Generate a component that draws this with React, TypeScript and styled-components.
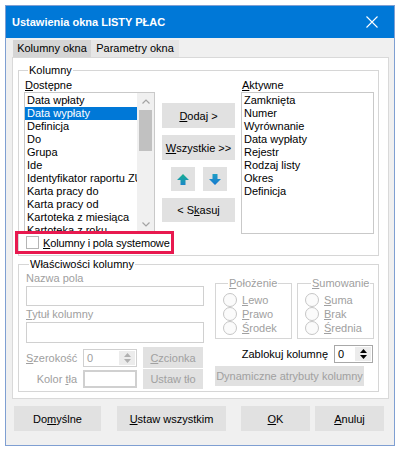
import React from 'react';
import styled, { createGlobalStyle } from 'styled-components';

const FONT = `"Liberation Sans", Arial, sans-serif`;
const GRAY_TEXT = '#a0a0a0';

const GlobalStyle = createGlobalStyle`
  html, body {
    margin: 0;
    padding: 0;
    background: #fff;
  }
  body {
    font-family: ${FONT};
    font-size: 11px;
    color: #000;
  }
  * {
    box-sizing: border-box;
  }
`;

const Window = styled.div`
  margin: 5px 0 0 5px;
  width: 390px;
  border: 1px solid #7f9fd2;
  background: #f0f0f0;
`;

const TitleBar = styled.div`
  height: 32px;
  background: #0078d7;
  color: #fff;
  display: flex;
  align-items: center;
  justify-content: space-between;
  padding: 0 16px 0 6px;
`;

const Title = styled.span`
  font-weight: bold;
  font-size: 11px;
`;

const Body = styled.div`
  padding: 2px 5px 14px 6px;
`;

const TabRow = styled.div`
  display: flex;
  height: 17px;
  padding-left: 1px;
`;

const Tab = styled.div<{ $w: number; $active?: boolean }>`
  width: ${(p) => p.$w}px;
  text-align: center;
  line-height: 17px;
  background: ${(p) => (p.$active ? '#d5d5d5' : '#e6e6e6')};
  white-space: nowrap;
`;

const Panel = styled.div`
  border: 1px solid #d9d9d9;
  background: #fff;
  height: 342px;
  padding: 5px 0 0 5px;
`;

const Group = styled.fieldset<{ $w: number }>`
  margin: 0;
  padding: 0;
  width: ${(p) => p.$w}px;
  min-width: 0;
  border: 1px solid #d6d6d6;
`;

const Legend = styled.legend<{ $ml?: number; $disabled?: boolean }>`
  margin-left: ${(p) => p.$ml ?? 9}px;
  padding: 0 1px;
  line-height: 15px;
  color: ${(p) => (p.$disabled ? GRAY_TEXT : '#000')};
`;

const Key = styled.span`
  text-decoration: underline;
`;

/* ---- Kolumny ---- */

const ColumnsArea = styled.div`
  display: flex;
  padding: 0 3px 0 5px;
`;

const ListCol = styled.div<{ $w: number }>`
  width: ${(p) => p.$w}px;
  display: flex;
  flex-direction: column;
`;

const ListLabel = styled.div`
  line-height: 14px;
  padding-left: 1px;
`;

const ListBox = styled.div`
  height: 142px;
  border: 1px solid #c9c9c9;
  display: flex;
  background: #fff;
`;

const ListItems = styled.div`
  flex: 1;
  min-width: 0;
  overflow: hidden;
  padding-top: 1px;
`;

const ListItem = styled.div<{ $selected?: boolean }>`
  height: 13px;
  line-height: 13px;
  padding-left: 2px;
  white-space: nowrap;
  overflow: hidden;
  background: ${(p) => (p.$selected ? '#0078d7' : 'transparent')};
  color: ${(p) => (p.$selected ? '#fff' : '#000')};
`;

const ScrollBar = styled.div`
  width: 17px;
  background: #f0f0f0;
  display: flex;
  flex-direction: column;
  align-items: center;
`;

const ScrollBtn = styled.div`
  height: 17px;
  width: 17px;
  display: flex;
  align-items: center;
  justify-content: center;
`;

const ScrollTrack = styled.div`
  flex: 1;
  width: 13px;
`;

const ScrollThumb = styled.div`
  height: 41px;
  background: #c1c1c1;
`;

const MidCol = styled.div`
  width: 73px;
  margin: 0 6px 0 7px;
  padding-top: 25px;
  display: flex;
  flex-direction: column;
  gap: 7px;
`;

const Button = styled.button<{ $w?: number; $h?: number; $disabled?: boolean }>`
  font-family: ${FONT};
  font-size: 11px;
  width: ${(p) => (p.$w ? `${p.$w}px` : '100%')};
  height: ${(p) => p.$h ?? 25}px;
  border: none;
  padding: 0;
  background: #e1e1e1;
  color: ${(p) => (p.$disabled ? GRAY_TEXT : '#000')};
  white-space: nowrap;
  display: flex;
  align-items: center;
  justify-content: center;
`;

const ArrowRow = styled.div`
  display: flex;
  justify-content: space-between;
  padding: 0 8px 0 9px;
`;

const CheckRow = styled.div`
  width: 159px;
  height: 23px;
  margin: -3px 0 1px -4px;
  border: 3px solid #e8194f;
  display: flex;
  align-items: center;
  gap: 4px;
  padding-left: 8px;
  white-space: nowrap;
  position: relative;
`;

const CheckLabel = styled.span`
  letter-spacing: -0.15px;
`;

const CheckBox = styled.div`
  width: 13px;
  height: 13px;
  border: 1px solid #b5b5b5;
  background: #fff;
`;

/* ---- Właściwości kolumny ---- */

const PropsGroup = styled(Group)`
  margin-top: 1px;
`;

const PropsArea = styled.div`
  display: grid;
  grid-template-columns: 178px 159px;
  column-gap: 11px;
  padding: 0 0 2px 7px;
`;

const PropsLeft = styled.div`
  display: flex;
  flex-direction: column;
`;

const FieldLabel = styled.div`
  line-height: 12px;
  height: 12px;
  color: ${GRAY_TEXT};
  margin: 0 0 2px 0;
`;

const TextBox = styled.div<{ $h: number }>`
  height: ${(p) => p.$h}px;
  border: 1px solid #d0d0d0;
  background: #fff;
  margin-bottom: 2px;
`;

const FormRow = styled.div<{ $h: number; $mt?: number }>`
  display: grid;
  grid-template-columns: 51px 54px 60px;
  column-gap: 6px;
  align-items: center;
  height: ${(p) => p.$h}px;
  margin-top: ${(p) => p.$mt ?? 0}px;
`;

const RowLabel = styled.div`
  text-align: right;
  color: ${GRAY_TEXT};
  white-space: nowrap;
`;

const Spin = styled.div<{ $w: number; $disabled?: boolean }>`
  width: ${(p) => p.$w}px;
  height: 18px;
  border: 1px solid ${(p) => (p.$disabled ? '#d0d0d0' : '#a8a8a8')};
  background: #fff;
  display: flex;
  align-items: center;
  padding: 0 1px 0 3px;
  color: ${(p) => (p.$disabled ? GRAY_TEXT : '#000')};
`;

const SpinValue = styled.span`
  flex: 1;
`;

const SpinButtons = styled.div<{ $disabled?: boolean }>`
  width: 16px;
  height: 14px;
  background: #ececec;
  display: flex;
  flex-direction: column;
  align-items: center;
  justify-content: center;
  gap: 2px;
  color: ${(p) => (p.$disabled ? '#b0b0b0' : '#000')};
`;

const ColorBox = styled.div`
  height: 18px;
  border: 2px solid #d0d0d0;
  background: #fff;
`;

const PropsRight = styled.div`
  display: flex;
  flex-direction: column;
  padding-top: 4px;
`;

const RadioGroups = styled.div`
  display: flex;
  gap: 5px;
`;

const RadioList = styled.div`
  display: flex;
  flex-direction: column;
  padding: 2px 0 3px 7px;
`;

const RadioRow = styled.div`
  display: flex;
  align-items: center;
  gap: 5px;
  height: 14px;
  color: ${GRAY_TEXT};
`;

const RadioCircle = styled.div`
  width: 14px;
  height: 14px;
  border-radius: 50%;
  border: 1px solid #c6c6c6;
  background: #fbfbfb;
`;

const LockRow = styled.div`
  display: flex;
  align-items: center;
  justify-content: flex-end;
  gap: 6px;
  margin: 6px 1px 0 0;
  height: 18px;
`;

const DynButton = styled(Button)`
  margin-top: 3px;
`;

const FooterRow = styled.div`
  display: flex;
  margin-top: 7px;
  padding-left: 2px;
`;

const FooterBtn = styled(Button)<{ $ml?: number }>`
  margin-left: ${(p) => p.$ml ?? 0}px;
`;

/* ---- drawings ---- */

const CloseIcon = () => (
  <svg width="12" height="12" viewBox="0 0 12 12">
    <path d="M0.5 0.5 L11.5 11.5 M11.5 0.5 L0.5 11.5" stroke="#fff" strokeWidth="1.1" />
  </svg>
);

const Chevron = ({ up }: { up?: boolean }) => (
  <svg width="8" height="5" viewBox="0 0 8 5">
    <path d={up ? 'M0.5 4.5 L4 1 L7.5 4.5' : 'M0.5 0.5 L4 4 L7.5 0.5'} stroke="#a3a3a3" strokeWidth="1.2" fill="none" />
  </svg>
);

const Tri = ({ up }: { up?: boolean }) => (
  <svg width="7" height="4" viewBox="0 0 7 4">
    <path d={up ? 'M0 4 L3.5 0 L7 4 Z' : 'M0 0 L3.5 4 L7 0 Z'} fill="currentColor" />
  </svg>
);

const MoveArrow = ({ up }: { up?: boolean }) => {
  const id = up ? 'arrUp' : 'arrDown';
  return (
    <svg width="12" height="11" viewBox="0 0 12 11">
      <defs>
        <linearGradient id={id} x1="0" y1="0" x2="0" y2="1">
          <stop offset="0" stopColor={up ? '#18b08f' : '#1f9fc4'} />
          <stop offset="1" stopColor={up ? '#1a86c9' : '#1577cf'} />
        </linearGradient>
      </defs>
      <path
        d={up ? 'M6 0 L12 6 L8.5 6 L8.5 11 L3.5 11 L3.5 6 L0 6 Z' : 'M6 11 L12 5 L8.5 5 L8.5 0 L3.5 0 L3.5 5 L0 5 Z'}
        fill={`url(#${id})`}
      />
    </svg>
  );
};

const available = [
  'Data wpłaty',
  'Data wypłaty',
  'Definicja',
  'Do',
  'Grupa',
  'Ide',
  'Identyfikator raportu ZUS',
  'Karta pracy do',
  'Karta pracy od',
  'Kartoteka z miesiąca',
  'Kartoteka z roku',
];

const active = ['Zamknięta', 'Numer', 'Wyrównanie', 'Data wypłaty', 'Rejestr', 'Rodzaj listy', 'Okres', 'Definicja'];

const Radio = ({ k, rest }: { k: string; rest: string }) => (
  <RadioRow>
    <RadioCircle />
    <span>
      <Key>{k}</Key>
      {rest}
    </span>
  </RadioRow>
);

export default function App() {
  return (
    <>
      <GlobalStyle />
      <Window>
        <TitleBar>
          <Title>Ustawienia okna LISTY PŁAC</Title>
          <CloseIcon />
        </TitleBar>
        <Body>
          <TabRow>
            <Tab $w={78} $active>
              Kolumny okna
            </Tab>
            <Tab $w={88}>Parametry okna</Tab>
          </TabRow>
          <Panel>
            <Group $w={361}>
              <Legend>Kolumny</Legend>
              <ColumnsArea>
                <ListCol $w={131}>
                  <ListLabel>
                    <Key>D</Key>ostępne
                  </ListLabel>
                  <ListBox>
                    <ListItems>
                      {available.map((item, i) => (
                        <ListItem key={item} $selected={i === 1}>
                          {item}
                        </ListItem>
                      ))}
                    </ListItems>
                    <ScrollBar>
                      <ScrollBtn>
                        <Chevron up />
                      </ScrollBtn>
                      <ScrollTrack>
                        <ScrollThumb />
                      </ScrollTrack>
                      <ScrollBtn>
                        <Chevron />
                      </ScrollBtn>
                    </ScrollBar>
                  </ListBox>
                </ListCol>
                <MidCol>
                  <Button>
                    <span>
                      <Key>D</Key>odaj &gt;
                    </span>
                  </Button>
                  <Button>
                    <span>
                      <Key>W</Key>szystkie &gt;&gt;
                    </span>
                  </Button>
                  <ArrowRow>
                    <Button $w={24} $h={24}>
                      <MoveArrow up />
                    </Button>
                    <Button $w={24} $h={24}>
                      <MoveArrow />
                    </Button>
                  </ArrowRow>
                  <Button $h={24}>
                    <span>
                      &lt; S<Key>k</Key>asuj
                    </span>
                  </Button>
                </MidCol>
                <ListCol $w={133}>
                  <ListLabel>
                    <Key>A</Key>ktywne
                  </ListLabel>
                  <ListBox>
                    <ListItems>
                      {active.map((item) => (
                        <ListItem key={item}>{item}</ListItem>
                      ))}
                    </ListItems>
                  </ListBox>
                </ListCol>
              </ColumnsArea>
              <CheckRow>
                <CheckBox />
                <CheckLabel>
                  <Key>K</Key>olumny i pola systemowe
                </CheckLabel>
              </CheckRow>
            </Group>

            <PropsGroup $w={361}>
              <Legend $ml={10}>Właściwości kolumny</Legend>
              <PropsArea>
                <PropsLeft>
                  <FieldLabel>Nazwa pola</FieldLabel>
                  <TextBox $h={20} />
                  <FieldLabel>
                    <Key>T</Key>ytuł kolumny
                  </FieldLabel>
                  <TextBox $h={21} />
                  <FormRow $h={21} $mt={2}>
                    <RowLabel>
                      <Key>S</Key>zerokość
                    </RowLabel>
                    <Spin $w={54} $disabled>
                      <SpinValue>0</SpinValue>
                      <SpinButtons $disabled>
                        <Tri up />
                        <Tri />
                      </SpinButtons>
                    </Spin>
                    <Button $h={21} $disabled>
                      <span>
                        <Key>C</Key>zcionka
                      </span>
                    </Button>
                  </FormRow>
                  <FormRow $h={20} $mt={1}>
                    <RowLabel>
                      Kolor <Key>t</Key>ła
                    </RowLabel>
                    <ColorBox />
                    <Button $h={20} $disabled>
                      Ustaw tło
                    </Button>
                  </FormRow>
                </PropsLeft>
                <PropsRight>
                  <RadioGroups>
                    <Group $w={77}>
                      <Legend $ml={12} $disabled>
                        <Key>P</Key>ołożenie
                      </Legend>
                      <RadioList>
                        <Radio k="L" rest="ewo" />
                        <Radio k="P" rest="rawo" />
                        <Radio k="Ś" rest="rodek" />
                      </RadioList>
                    </Group>
                    <Group $w={77}>
                      <Legend $ml={13} $disabled>
                        <Key>S</Key>umowanie
                      </Legend>
                      <RadioList>
                        <Radio k="S" rest="uma" />
                        <Radio k="B" rest="rak" />
                        <Radio k="Ś" rest="rednia" />
                      </RadioList>
                    </Group>
                  </RadioGroups>
                  <LockRow>
                    <span>Zablokuj kolumnę</span>
                    <Spin $w={39}>
                      <SpinValue>0</SpinValue>
                      <SpinButtons>
                        <Tri up />
                        <Tri />
                      </SpinButtons>
                    </Spin>
                  </LockRow>
                  <DynButton $w={149} $h={20} $disabled>
                    Dynamiczne atrybuty kolumny
                  </DynButton>
                </PropsRight>
              </PropsArea>
            </PropsGroup>
          </Panel>
          <FooterRow>
            <FooterBtn $w={87}>
              <span>
                Do<Key>m</Key>yślne
              </span>
            </FooterBtn>
            <FooterBtn $w={109} $ml={16}>
              <span>
                <Key>U</Key>staw wszystkim
              </span>
            </FooterBtn>
            <FooterBtn $w={69} $ml={15}>
              <span>
                <Key>O</Key>K
              </span>
            </FooterBtn>
            <FooterBtn $w={69} $ml={5}>
              <span>
                <Key>A</Key>nuluj
              </span>
            </FooterBtn>
          </FooterRow>
        </Body>
      </Window>
    </>
  );
}
